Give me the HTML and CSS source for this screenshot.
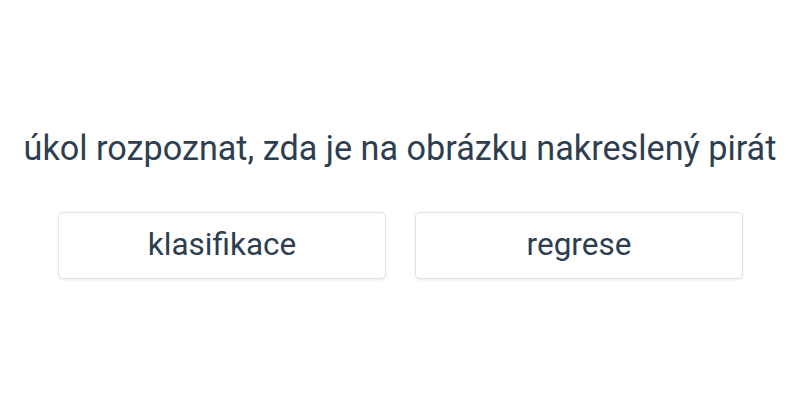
FILE: index.html
```html
<!DOCTYPE html>
<html lang="cs">
<head>
<meta charset="utf-8">
<link rel="stylesheet" href="styles.css">
</head>
<body>
<main class="quiz">
  <h1 class="question">úkol rozpoznat, zda je na obrázku nakreslený pirát</h1>
  <div class="options">
    <button class="option">klasifikace</button>
    <button class="option">regrese</button>
  </div>
</main>
</body>
</html>
```

FILE: styles.css
```css
html, body {
  margin: 0;
  padding: 0;
  background: #ffffff;
}
body {
  font-family: Roboto, "Liberation Sans", sans-serif;
  color: #2c3e50;
  width: 800px;
  height: 400px;
}
.quiz {
  display: flex;
  flex-direction: column;
  align-items: center;
  padding-top: 126px;
}
.question {
  margin: 0;
  font-size: 34.2px;
  font-weight: 400;
  line-height: 44px;
  text-align: center;
  white-space: nowrap;
  color: #2c3e50;
}
.options {
  display: grid;
  grid-template-columns: 328px 328px;
  gap: 29px;
  margin-top: 42px;
  margin-left: 1px;
}
.option {
  height: 67px;
  background: #ffffff;
  border: 1px solid #e2e2e2;
  border-radius: 5px;
  box-shadow: 0 1px 3px rgba(0, 0, 0, 0.08);
  font-family: Roboto, "Liberation Sans", sans-serif;
  font-size: 31.5px;
  color: #2c3e50;
  padding: 0 0 3px 0;
}
```
